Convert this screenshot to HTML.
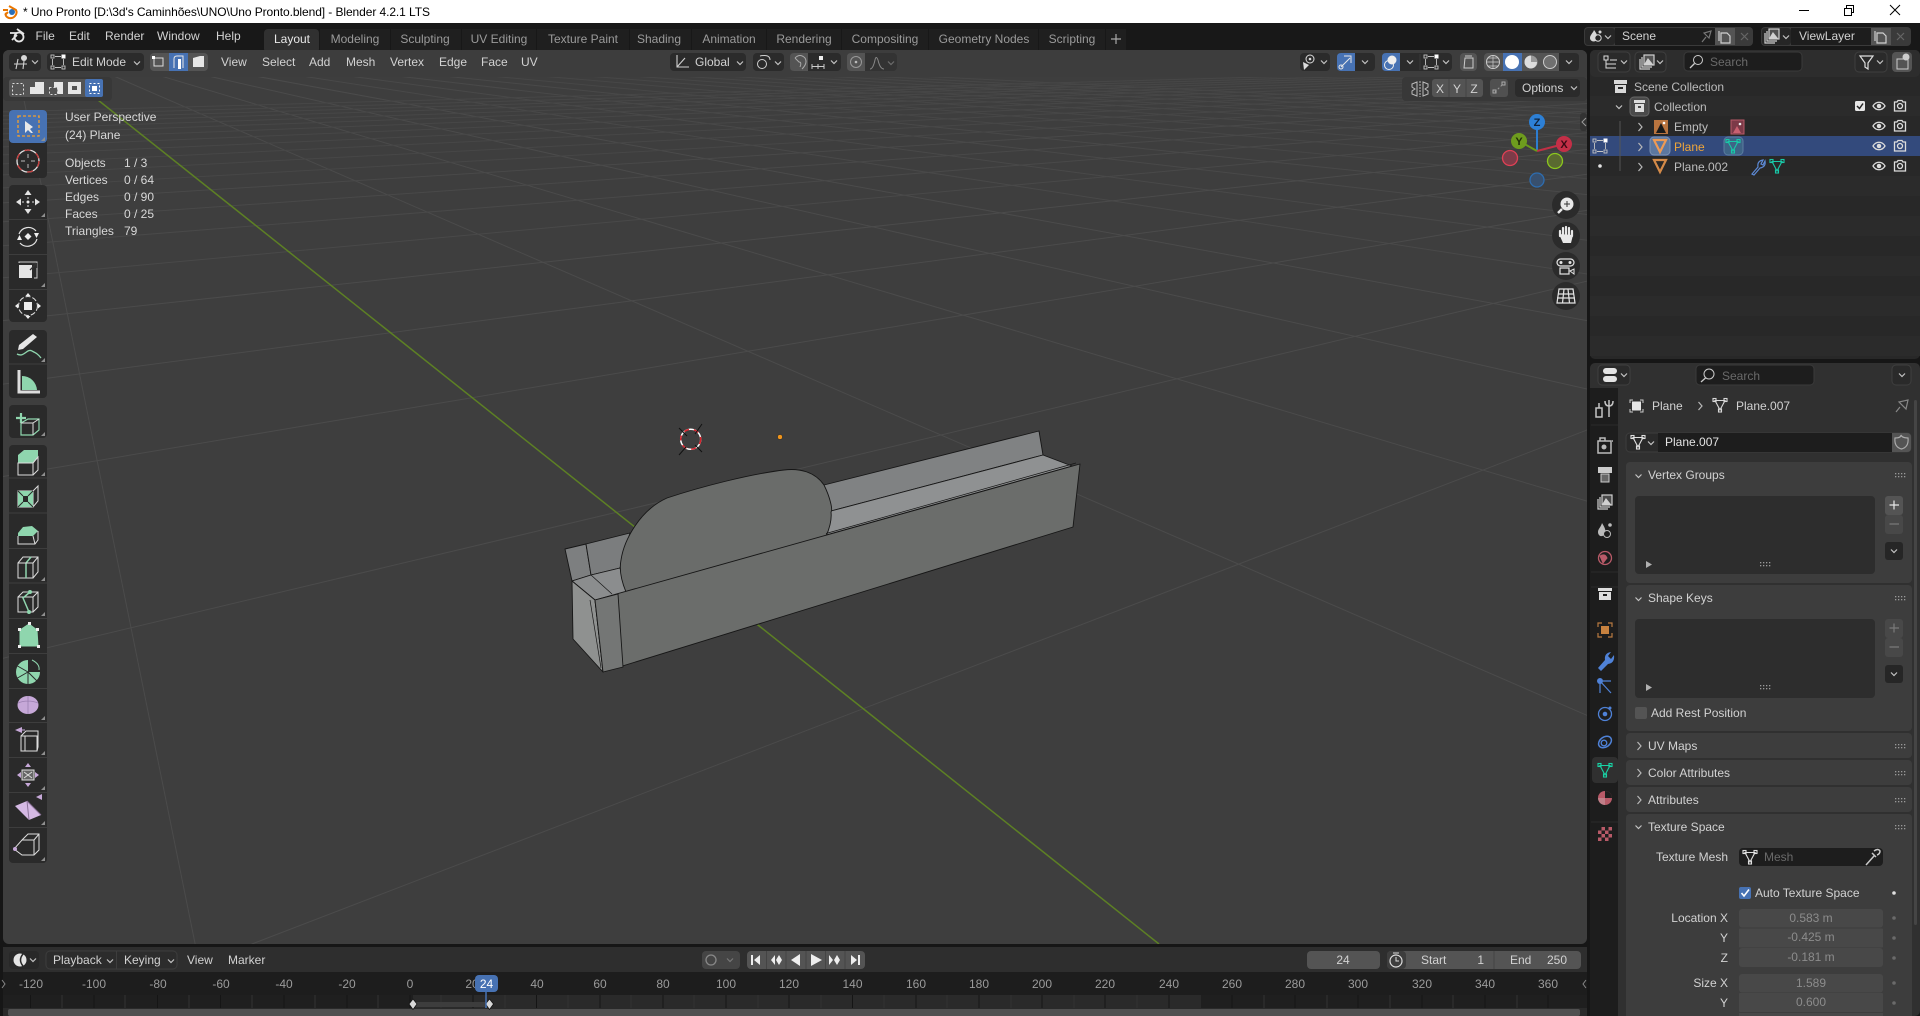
<!DOCTYPE html>
<html><head><meta charset="utf-8"><title>Uno Pronto - Blender 4.2.1 LTS</title>
<style>
html,body{margin:0;padding:0;background:#161616;width:1920px;height:1016px;overflow:hidden}
svg{display:block}
text{font-family:"Liberation Sans",sans-serif;font-size:12px;fill:#d2d2d2}
.n{fill:#d8d8d8}.g{fill:#9b9b9b}.m{text-anchor:middle}.e{text-anchor:end}
.s{fill:none;stroke:#d0d0d0;stroke-width:1.2}
.w{fill:none;stroke:#e4e4e4;stroke-width:1.3}
</style></head><body>
<svg width="1920" height="1016" viewBox="0 0 1920 1016" xmlns="http://www.w3.org/2000/svg">
<defs>
<path id="cd" d="M-3-1.5 0 1.5 3-1.5" fill="none" stroke="#c4c4c4" stroke-width="1.2"/>
<path id="cr" d="M-1.5-4 2 0-1.5 4" fill="none" stroke="#b8b8b8" stroke-width="1.2"/>
<path id="tr" d="M0 0V-4L-4 0Z" fill="#8f8f8f"/>
<g id="mesh" fill="none" stroke="currentColor" stroke-width="1.1"><path d="M-5-4.500H5L0 5Z"/><rect x="-7" y="-6.500" width="3" height="3"/><rect x="4" y="-6.500" width="3" height="3"/><rect x="-1.500" y="4" width="3" height="3"/></g>
<g id="eye" fill="none" stroke="#dcdcdc" stroke-width="1.300"><path d="M-6 0C-3-5 3-5 6 0 3 5-3 5-6 0Z"/><circle r="1.600" fill="#dcdcdc"/></g>
<g id="cam" fill="none" stroke="#dcdcdc" stroke-width="1.300"><path d="M-5.500-4H-3L-2-5.500H2L3-4H5.500V5H-5.500Z"/><circle r="2.500"/></g>
<g id="grip" fill="#9a9a9a"><rect x="0" y="0" width="1.300" height="1.300"/><rect x="3" y="0" width="1.300" height="1.300"/><rect x="6" y="0" width="1.300" height="1.300"/><rect x="9" y="0" width="1.300" height="1.300"/><rect x="0" y="3" width="1.300" height="1.300"/><rect x="3" y="3" width="1.300" height="1.300"/><rect x="6" y="3" width="1.300" height="1.300"/><rect x="9" y="3" width="1.300" height="1.300"/></g>
<g id="imgs" fill="none" stroke="#d0d0d0" stroke-width="1.200"><rect x="-3" y="-7" width="10" height="10" fill="#d0d0d0" fill-opacity=".25"/><path d="M-5-5V5H5M-7-3V7H3"/><path d="M-2 2 1-3 5 2Z" fill="#d0d0d0"/></g>
<g id="sel" fill="none" stroke="#c4c4c4" stroke-width=".9"><path d="M-3-5.500H3M-5.500-3V3M5.500-3V3M-3 5.500H3"/><rect x="-7" y="-7" width="3" height="3"/><rect x="-7" y="4" width="3" height="3"/><rect x="4" y="4" width="3" height="3"/><rect x="3.500" y="-7.500" width="4" height="4" fill="#fff" stroke="none"/></g>
<clipPath id="vp"><rect x="3" y="50" width="1584" height="894" rx="6"/></clipPath>
</defs>

<!-- title bar -->
<rect width="1920" height="23" fill="#fff"/>
<circle cx="12" cy="12" r="3" fill="#2a6fb8"/><path d="M3 10H8M5 15 8 12M9 6 16 10C18 14 14 19 9 18 6 17 5 15 6 13" fill="none" stroke="#ea7600" stroke-width="2"/>
<text x="23" y="16" style="fill:#000" textLength="407">* Uno Pronto [D:\3d's Caminhões\UNO\Uno Pronto.blend] - Blender 4.2.1 LTS</text>
<path d="M1799 10.500H1809" stroke="#000" stroke-width="1"/>
<path d="M1844.500 8.500H1851.500V15.500H1844.500ZM1846.500 8V5.500H1853.500V12.500H1851.500" fill="none" stroke="#000"/>
<path d="M1890 5 1900 15M1900 5 1890 15" stroke="#000" stroke-width="1"/>

<!-- top bar -->
<rect y="23" width="1920" height="27" fill="#181818"/>
<g fill="none" stroke="#e6e6e6" stroke-width="1.800"><circle cx="19" cy="37" r="4.500"/><path d="M10 33H17M12 40 17 35M17 29 24 34"/></g>
<text x="35.500" y="40">File</text><text x="69" y="40">Edit</text><text x="105" y="40">Render</text><text x="157" y="40">Window</text><text x="216" y="40">Help</text>
<g fill="#1f1f1f">
<rect x="320" y="29" width="70" height="21"/><rect x="391" y="29" width="70" height="21"/><rect x="462" y="29" width="74" height="21"/><rect x="537" y="29" width="92" height="21"/><rect x="630" y="29" width="61" height="21"/><rect x="692" y="29" width="74" height="21"/><rect x="767" y="29" width="74" height="21"/><rect x="842" y="29" width="86" height="21"/><rect x="929" y="29" width="109" height="21"/><rect x="1039" y="29" width="66" height="21"/><rect x="1106" y="29" width="20" height="21"/>
</g>
<rect x="264" y="29" width="55" height="24" rx="4" fill="#303030"/>
<text x="292" y="43" class="m" style="fill:#e8e8e8">Layout</text>
<g class="g">
<text x="355" y="43" class="m g">Modeling</text><text x="425" y="43" class="m g">Sculpting</text><text x="499" y="43" class="m g">UV Editing</text><text x="583" y="43" class="m g">Texture Paint</text><text x="659" y="43" class="m g">Shading</text><text x="729" y="43" class="m g">Animation</text><text x="804" y="43" class="m g">Rendering</text><text x="885" y="43" class="m g">Compositing</text><text x="984" y="43" class="m g">Geometry Nodes</text><text x="1072" y="43" class="m g">Scripting</text>
</g>
<path d="M1116 34V44M1111 39H1121" stroke="#a8a8a8" stroke-width="1.200"/>

<!-- scene / view layer -->
<rect x="1584" y="27" width="169" height="19" rx="4" fill="#3a3a3a"/>
<rect x="1585" y="28" width="30" height="17" rx="3" fill="#262626"/>
<rect x="1615" y="28" width="100" height="17" fill="#1d1d1d"/>
<rect x="1715" y="28" width="20" height="17" fill="#545454"/>
<path d="M1594 30C1597 34 1598 36 1597 40 1594 43 1590 41 1590 38 1590 35 1593 33 1594 30Z" fill="#d8d8d8"/><circle cx="1598" cy="38" r="3.200" fill="#262626" stroke="#d8d8d8"/><circle cx="1600" cy="32" r="1.500" fill="#d8d8d8"/>
<use href="#cd" x="1608" y="37"/>
<text x="1622" y="40">Scene</text>
<path d="M1702 42 1706 37M1704 33 1709 38 1711 31Z" fill="none" stroke="#777" stroke-width="1.200"/>
<path d="M1721 33H1727L1730 36V43H1721ZM1719 31V41" fill="none" stroke="#d0d0d0" stroke-width="1.200"/>
<path d="M1741 33 1748 40M1748 33 1741 40" stroke="#666" stroke-width="1.200"/>
<rect x="1761" y="27" width="150" height="19" rx="4" fill="#3a3a3a"/>
<rect x="1762" y="28" width="29" height="17" rx="3" fill="#262626"/>
<rect x="1791" y="28" width="80" height="17" fill="#1d1d1d"/>
<rect x="1871" y="28" width="20" height="17" fill="#545454"/>
<use href="#imgs" x="1772" y="36"/><use href="#cd" x="1786" y="37"/>
<text x="1799" y="40">ViewLayer</text>
<path d="M1877 33H1883L1886 36V43H1877ZM1875 31V41" fill="none" stroke="#d0d0d0" stroke-width="1.200"/>
<path d="M1897 33 1904 40M1904 33 1897 40" stroke="#666" stroke-width="1.200"/>

<!-- viewport -->
<rect x="3" y="50" width="1584" height="894" rx="6" fill="#3e3e3e"/>
<g clip-path="url(#vp)">
<!-- grid family 1 (vanishing at 10,31) -->
<g stroke="#4b4b4b" stroke-width="1">
<line x1="10" y1="31" x2="206.500" y2="1000"/><line x1="10" y1="31" x2="1600" y2="721"/><line x1="10" y1="31" x2="1600" y2="505"/><line x1="10" y1="31" x2="1600" y2="392"/><line x1="10" y1="31" x2="1600" y2="323"/>
</g>
<g stroke="#494949" stroke-width="1">
<line x1="10" y1="31" x2="1600" y2="276"/><line x1="10" y1="31" x2="1600" y2="242"/><line x1="10" y1="31" x2="1600" y2="216"/><line x1="10" y1="31" x2="1600" y2="196"/>
</g>
<g stroke="#474747" stroke-width="1">
<line x1="10" y1="31" x2="1600" y2="180"/><line x1="10" y1="31" x2="1600" y2="166"/><line x1="10" y1="31" x2="1600" y2="155"/><line x1="10" y1="31" x2="1600" y2="146"/><line x1="10" y1="31" x2="1600" y2="138"/><line x1="10" y1="31" x2="1600" y2="131"/><line x1="10" y1="31" x2="1600" y2="124.500"/><line x1="10" y1="31" x2="1600" y2="119"/><line x1="10" y1="31" x2="1600" y2="114.500"/><line x1="10" y1="31" x2="1600" y2="110"/>
</g>
<!-- grid family 2 (vanishing at 2600,40) -->
<g stroke="#4b4b4b" stroke-width="1">
<line x1="2600" y1="40" x2="0" y2="1041"/><line x1="2600" y1="40" x2="0" y2="659"/><line x1="2600" y1="40" x2="0" y2="477"/><line x1="2600" y1="40" x2="0" y2="384.500"/><line x1="2600" y1="40" x2="0" y2="321"/>
</g>
<g stroke="#494949" stroke-width="1">
<line x1="2600" y1="40" x2="0" y2="278"/><line x1="2600" y1="40" x2="0" y2="246"/><line x1="2600" y1="40" x2="0" y2="222"/><line x1="2600" y1="40" x2="0" y2="203"/>
</g>
<g stroke="#474747" stroke-width="1">
<line x1="2600" y1="40" x2="0" y2="188"/><line x1="2600" y1="40" x2="0" y2="175"/><line x1="2600" y1="40" x2="0" y2="164"/><line x1="2600" y1="40" x2="0" y2="155"/><line x1="2600" y1="40" x2="0" y2="147"/><line x1="2600" y1="40" x2="0" y2="140"/><line x1="2600" y1="40" x2="0" y2="134"/><line x1="2600" y1="40" x2="0" y2="129"/><line x1="2600" y1="40" x2="0" y2="124"/><line x1="2600" y1="40" x2="0" y2="120"/><line x1="2600" y1="40" x2="0" y2="116"/><line x1="2600" y1="40" x2="0" y2="112"/>
</g>
<line x1="10" y1="30" x2="1159" y2="944" stroke="#5d8024" stroke-width="1.500"/>
<rect x="3" y="50" width="1584" height="27" fill="#3d3d3d"/>
</g>

<!-- mesh -->
<g stroke="#161616" stroke-width=".9" stroke-linejoin="round">
<polygon points="824,485 1039,431 1043,455 831,511" fill="#808283"/>
<polygon points="831,511 1043,455 1072,466 826,535" fill="#8f9192"/>
<polygon points="565,549 586,544 591,575 572,581" fill="#7d7f80"/>
<polygon points="586,544 630,533 620,568 591,575" fill="#7b7d7e"/>
<polygon points="572,581 591,575 620,568 626,592 595,600" fill="#8b8d8e"/>
<path d="M591 575 612 594" fill="none" stroke-width=".7"/>
<polygon points="572,581 595,600 603,672 573,639" fill="#8f9190"/>
<path d="M590 600 601 668" fill="none" stroke-width=".7"/>
<path d="M626 592C621 580 619 570 621 560 624 540 640 510 667 498 700 487 750 474 784 470 800 468 815 472 824 485 830 497 833 510 831 512 832 520 829 530 826 536Z" fill="#6a6c6a"/>
<polygon points="595,600 1080,464 1073,527 603,672" fill="#6b6d6b"/>
<polygon points="595,600 618,594 623,667 603,672" fill="#747675"/>
<path d="M826 533.500 1076 463" fill="none" stroke-width=".7"/>
</g>
<!-- 3d cursor + origin -->
<circle cx="690.700" cy="439.300" r="10" fill="none" stroke="#fff" stroke-width="1.500"/>
<circle cx="690.700" cy="439.300" r="10" fill="none" stroke="#d8202a" stroke-width="1.500" stroke-dasharray="5 5"/>
<path d="M679 428 687 436M702 424 695 434M679 455 686 447M702 452 695 445" stroke="#111" stroke-width="1"/>
<circle cx="780" cy="437" r="2.500" fill="#f0951c" stroke="#222" stroke-width=".5"/>

<!-- viewport header -->
<rect x="9" y="53" width="32" height="18" rx="4" fill="#2b2b2b"/>
<circle cx="24" cy="58" r="3" fill="#d8d8d8"/><path d="M14 64H27M18 59 16 69M24 61 23 69" stroke="#d0d0d0" stroke-width="1.100"/>
<use href="#cd" x="35" y="62"/>
<rect x="47" y="53" width="97" height="18" rx="4" fill="#2b2b2b"/>
<use href="#sel" x="58" y="62"/>
<text x="72" y="66">Edit Mode</text><use href="#cd" x="137" y="63"/>
<rect x="150" y="53" width="58" height="18" rx="4" fill="#545454"/>
<rect x="169" y="53" width="19" height="18" fill="#4772b3"/>
<path d="M154 58H163V66H154Z" fill="none" stroke="#ddd"/><rect x="152" y="56" width="3" height="3" fill="#fff"/>
<path d="M174 68V59Q174 56 177 56H183V68" fill="none" stroke="#e8e8e8"/><rect x="178" y="59" width="3" height="10" fill="#fff"/>
<path d="M193 58 200 56H204V67H193Z" fill="#e6e6e6"/>
<text x="221" y="66">View</text><text x="262" y="66">Select</text><text x="309" y="66">Add</text><text x="346" y="66">Mesh</text><text x="390" y="66">Vertex</text><text x="439" y="66">Edge</text><text x="481" y="66">Face</text><text x="521" y="66">UV</text>

<rect x="670" y="53" width="76" height="18" rx="4" fill="#2b2b2b"/>
<path d="M677 55V67H689M677 67 685 58" fill="none" stroke="#d0d0d0" stroke-width="1.100"/>
<text x="695" y="66">Global</text><use href="#cd" x="740" y="63"/>
<rect x="753" y="53" width="31" height="18" rx="4" fill="#2b2b2b"/>
<circle cx="762" cy="64" r="4.500" fill="none" stroke="#d0d0d0"/><path d="M760 56Q770 54 770 60" fill="none" stroke="#d0d0d0"/><use href="#cd" x="778" y="63"/>
<rect x="790" y="53" width="51" height="18" rx="4" fill="#2b2b2b"/>
<path d="M790 57Q790 53 794 53H808V71H794Q790 71 790 67Z" fill="#545454"/>
<path d="M795 58Q800 53 805 58 808 63 802 69M795 58 799 62Q802 62 800 67" fill="none" stroke="#aaa"/>
<path d="M812 64V69M818 64V69M824 64V69M812 66.500H824" stroke="#ccc" fill="none"/><rect x="819" y="56" width="4" height="4" fill="#eee"/><use href="#cd" x="834" y="62"/>
<rect x="847" y="53" width="50" height="18" rx="4" fill="#333"/>
<path d="M851 53H865V71H851Q847 71 847 67V57Q847 53 851 53Z" fill="#545454"/>
<circle cx="856" cy="62" r="5.500" fill="none" stroke="#999"/><circle cx="856" cy="62" r="1.300" fill="#bbb"/>
<path d="M870 69Q873 69 875 60 876 55 878 60 880 69 884 69" fill="none" stroke="#888"/>
<use href="#cd" x="891" y="63" opacity=".4"/>

<rect x="1300" y="53" width="30" height="18" rx="4" fill="#2b2b2b"/>
<circle cx="1310" cy="59" r="4" fill="none" stroke="#dcdcdc"/><circle cx="1310" cy="59" r="1.300" fill="#dcdcdc"/><path d="M1303 62 1309 65 1304 70Z" fill="#dcdcdc"/><use href="#cd" x="1324" y="62"/>
<rect x="1337" y="53" width="38" height="18" rx="4" fill="#2b2b2b"/>
<path d="M1341 53H1355V71H1341Q1337 71 1337 67V57Q1337 53 1341 53Z" fill="#4772b3"/>
<path d="M1341 67 1350 58M1344 56H1351V63" fill="none" stroke="#e8e8e8"/><circle cx="1341" cy="67" r="2" fill="none" stroke="#e8e8e8"/><use href="#cd" x="1365" y="62"/>
<rect x="1382" y="53" width="70" height="18" rx="4" fill="#2b2b2b"/>
<path d="M1386 53H1400V71H1386Q1382 71 1382 67V57Q1382 53 1386 53Z" fill="#4772b3"/>
<circle cx="1392" cy="60" r="4.500" fill="#eee"/><circle cx="1389" cy="65" r="4.500" fill="none" stroke="#eee"/><use href="#cd" x="1410" y="62"/>
<path d="M1420 54V70" stroke="#3a3a3a"/><use href="#sel" x="1431" y="62"/><use href="#cd" x="1446" y="62"/>
<rect x="1460" y="53" width="17" height="18" rx="4" fill="#545454"/>
<path d="M1465 58H1473V68H1464ZM1465 56H1472" fill="none" stroke="#ccc"/>
<rect x="1484" y="53" width="95" height="18" rx="4" fill="#545454"/>
<rect x="1503" y="53" width="19" height="18" fill="#4772b3"/>
<path d="M1559 53H1575Q1579 53 1579 57V67Q1579 71 1575 71H1559Z" fill="#2b2b2b"/>
<circle cx="1493" cy="62" r="6.500" fill="none" stroke="#ccc"/><path d="M1487 62H1499M1493 56V68M1488 58H1498M1488 66H1498" stroke="#ccc" stroke-width=".7"/>
<circle cx="1512" cy="62" r="7" fill="#fff"/>
<circle cx="1531" cy="62" r="6.500" fill="#999"/><path d="M1531 55.500A6.500 6.500 0 0 0 1531 68.500 6.500 6.500 0 0 0 1537 62H1531Z" fill="#ddd"/>
<circle cx="1550" cy="62" r="6.500" fill="#707070" stroke="#ccc"/><use href="#cd" x="1569" y="62"/>

<!-- tool settings -->
<rect x="3" y="77" width="109" height="24" rx="4" fill="#383838"/>
<rect x="9" y="79" width="94" height="18" rx="3" fill="#545454"/>
<rect x="85" y="79" width="18" height="18" rx="2" fill="#4772b3"/>
<rect x="12.500" y="83.500" width="11" height="11" fill="none" stroke="#ddd" stroke-dasharray="2 2"/>
<path d="M35 82H44V94H30V87H35Z" fill="#e6e6e6"/>
<path d="M54 82H63V94H54" fill="#e6e6e6"/><rect x="49.500" y="87.500" width="8" height="7" fill="#545454" stroke="#ddd" stroke-dasharray="2 2"/>
<path d="M68 82H81V94H68ZM72 86V90H77V86Z" fill="#e6e6e6" fill-rule="evenodd"/>
<rect x="89.500" y="83.500" width="10" height="10" fill="none" stroke="#fff" stroke-dasharray="2 2"/><rect x="92" y="86" width="5" height="5" fill="#fff"/>
<rect x="1402" y="77" width="185" height="24" rx="4" fill="#383838"/>
<path d="M1420 81V97" stroke="#bbb" stroke-dasharray="2 1"/><path d="M1417 82 1412 84V87L1415 89 1412 91V94L1417 96ZM1423 82 1428 84V87L1425 89 1428 91V94L1423 96Z" fill="none" stroke="#bbb"/>
<rect x="1432" y="79" width="51" height="18" rx="3" fill="#545454"/><path d="M1449 79V97M1466 79V97" stroke="#444"/>
<text x="1440" y="93" class="m">X</text><text x="1457" y="93" class="m">Y</text><text x="1474" y="93" class="m">Z</text>
<rect x="1490" y="79" width="18" height="18" rx="3" fill="#505050"/>
<path d="M1495 92 1503 84" stroke="#999" stroke-dasharray="2 2"/><rect x="1493" y="90" width="3" height="3" fill="none" stroke="#aaa"/><rect x="1502" y="82" width="3" height="3" fill="none" stroke="#aaa"/>
<rect x="1515" y="79" width="65" height="18" rx="4" fill="#2b2b2b"/>
<text x="1522" y="92">Options</text><use href="#cd" x="1574" y="88"/>

<!-- stats text -->
<g>
<text x="65" y="121" class="n">User Perspective</text><text x="65" y="139" class="n">(24) Plane</text>
<text x="65" y="167" class="n">Objects</text><text x="124" y="167" class="n">1 / 3</text>
<text x="65" y="184" class="n">Vertices</text><text x="124" y="184" class="n">0 / 64</text>
<text x="65" y="201" class="n">Edges</text><text x="124" y="201" class="n">0 / 90</text>
<text x="65" y="218" class="n">Faces</text><text x="124" y="218" class="n">0 / 25</text>
<text x="65" y="235" class="n">Triangles</text><text x="124" y="235" class="n">79</text>
</g>

<!-- toolbar -->
<g fill="#2a2a2a">
<rect x="9" y="110" width="38" height="68" rx="4"/><rect x="9" y="185" width="38" height="137" rx="4"/><rect x="9" y="330" width="38" height="68" rx="4"/><rect x="9" y="405" width="38" height="33" rx="4"/><rect x="9" y="445" width="38" height="418" rx="4"/>
</g>
<rect x="9" y="110" width="38" height="33" rx="4" fill="#4772b3"/>
<path d="M9 219.500H47M9 254.500H47M9 289.500H47M9 364H47M9 478H47M9 513H47M9 548.500H47M9 583H47M9 618.500H47M9 653.500H47M9 688.500H47M9 722.500H47M9 757.500H47M9 792.500H47M9 827.500H47" stroke="#3d3d3d"/>
<rect x="18" y="116" width="21" height="20" fill="none" stroke="#f0a030" stroke-width="1.300" stroke-dasharray="3 2"/>
<path d="M25 121V133L28 130 31 133H33L30 129 33 127Z" fill="#e8e8e8"/>
<use href="#tr" x="45" y="141"/><use href="#tr" x="45" y="217"/><use href="#tr" x="45" y="287"/><use href="#tr" x="45" y="362"/><use href="#tr" x="45" y="436"/><use href="#tr" x="45" y="476"/><use href="#tr" x="45" y="581"/><use href="#tr" x="45" y="616"/><use href="#tr" x="45" y="720"/><use href="#tr" x="45" y="755"/><use href="#tr" x="45" y="790"/><use href="#tr" x="45" y="825"/><use href="#tr" x="45" y="861"/>
<!-- cursor -->
<circle cx="28" cy="161" r="11" fill="none" stroke="#e0e0e0" stroke-width="1.300"/><circle cx="28" cy="161" r="11" fill="none" stroke="#c83c3c" stroke-width="1.300" stroke-dasharray="6 6"/>
<path d="M28 154V158M28 164V168M21 161H25M31 161H35" stroke="#bbb"/>
<!-- move -->
<path d="M28 190 24.500 195H31.500ZM28 214 24.500 209H31.500ZM16 202 21 198.500V205.500ZM40 202 35 198.500V205.500Z" fill="#e4e4e4"/><path d="M28 197V199M28 205V207M22 202H24M32 202H34" stroke="#ddd"/><circle cx="28" cy="202" r="1.500" fill="#eee"/>
<!-- rotate -->
<path d="M19 234A10 10 0 0 1 36 231M37 239A10 10 0 0 1 20 243" fill="none" stroke="#e4e4e4" stroke-width="1.200"/><path d="M28 233 31.500 236.500 28 240 24.500 236.500Z" fill="#eee"/><path d="M17 240H22L19.500 235ZM34 233H39L36.500 238Z" fill="#eee"/>
<!-- scale -->
<rect x="19" y="265" width="13" height="13" fill="#e4e4e4"/><path d="M19 263V262H37V278H34" fill="none" stroke="#ccc"/><path d="M30 270 36 264M32 263.500H36.500V268" fill="none" stroke="#333" stroke-width="1.300"/>
<!-- transform -->
<circle cx="28" cy="306" r="9.500" fill="none" stroke="#ddd" stroke-dasharray="5 2" stroke-width="1.100"/><rect x="24" y="302" width="8" height="8" fill="#eee"/><path d="M28 293 25.500 296H30.500ZM28 319 25.500 316H30.500ZM15 306 18 303.500V308.500ZM41 306 38 303.500V308.500Z" fill="#eee"/>
<!-- annotate -->
<path d="M19 345 33 334 37 337 23 349 18 350Z" fill="#e6e6e6"/><path d="M17 354C24 358 27 348 32 351 36 353 38 354 41 358" fill="none" stroke="#8fd6ae" stroke-width="1.300"/>
<!-- measure -->
<path d="M19 370V392H40" fill="none" stroke="#ddd" stroke-width="3"/><path d="M22 390V376A15 15 0 0 1 37 390Z" fill="#8fd6ae"/>
<!-- add cube -->
<path d="M21 413V423M16 418H26" stroke="#8fd6ae" stroke-width="2.200"/><path d="M21 423 28 419H39V430L33 435H21Z" fill="none" stroke="#8fd6ae" stroke-width="1.200"/><path d="M21 423H33V435M33 423 39 419" fill="none" stroke="#ddd"/>
<!-- extrude -->
<path d="M18 455 24 450H38V457L33 463H18Z" fill="#8fd6ae"/><path d="M18 463H33V475H18ZM33 463 38 457V470L33 475" fill="none" stroke="#ddd"/>
<!-- inset -->
<path d="M18 491H33V507H18ZM33 491 38 486V501L33 507" fill="none" stroke="#ddd"/><path d="M18 491H33V507H18ZM23 496V502H28V496Z" fill="#8fd6ae" fill-rule="evenodd"/><path d="M18 491 23 496M33 491 28 496M18 507 23 502M33 507 28 502" stroke="#2a2a2a"/>
<!-- bevel -->
<path d="M18 533 23 527 32 526 38 531 33 536H18Z" fill="#8fd6ae"/><path d="M18 536V544H35L38 540V531M33 536 35 544" fill="none" stroke="#ddd"/>
<!-- loop cut -->
<path d="M18 563V578H33V563ZM18 563 23 557H38V572L33 578M33 563 38 557" fill="none" stroke="#ddd"/><path d="M26 578V563L31 557" fill="none" stroke="#8fd6ae" stroke-width="1.500"/><path d="M18 563H33" stroke="#ddd"/>
<!-- knife -->
<path d="M18 597V612H33V597ZM18 597 23 592H38V607L33 612M33 597 38 592" fill="none" stroke="#ddd"/><path d="M30 592 23 598 29 612" fill="none" stroke="#8fd6ae" stroke-width="1.500"/><circle cx="30" cy="592" r="2" fill="#8fd6ae"/><circle cx="29" cy="612" r="2" fill="#8fd6ae"/>
<!-- poly build -->
<path d="M20 630 29 624 37 630 38 646H20Z" fill="#8fd6ae" stroke="#8fd6ae"/><g fill="#eee"><rect x="18" y="628" width="3" height="3"/><rect x="28" y="622" width="3" height="3"/><rect x="36" y="628" width="3" height="3"/><rect x="37" y="645" width="3" height="3"/><rect x="18" y="645" width="3" height="3"/></g>
<!-- spin -->
<path d="M28 672V660A12 12 0 1 0 40 672Z" fill="#8fd6ae"/><path d="M28 672V684M28 672 17.500 666M28 672 17.500 678M28 672 37 681" stroke="#2a2a2a"/><path d="M32 660Q40 664 39 670" fill="none" stroke="#8fd6ae"/>
<!-- smooth -->
<ellipse cx="28" cy="705" rx="10.500" ry="9" fill="#c6a8d8"/><path d="M18 703Q28 699 38 703M28 696V714" fill="none" stroke="#9a7fb0" stroke-width=".8"/>
<!-- edge slide -->
<path d="M21 736V751H37V736ZM37 736V751" fill="none" stroke="#ddd"/><path d="M21 736 26 731H38V747L37 751M25 736V751" fill="none" stroke="#ddd"/><path d="M15 730 22 727V733Z" fill="#c6a8d8"/><path d="M22 730H25" stroke="#c6a8d8"/>
<!-- shrink/fatten -->
<rect x="22" y="770" width="12" height="10" fill="#666" stroke="#ddd"/><path d="M24 772 32 778M32 772 24 778" stroke="#ddd"/><path d="M28 763 25 767H31ZM28 787 25 783H31ZM17 775 21 772V778ZM39 775 35 772V778Z" fill="#c6a8d8"/>
<!-- shear -->
<path d="M15 806 27 801 41 815 29 820Z" fill="#d5b9e4"/><path d="M27 801 29 820M27 801 41 815" stroke="#8a7298"/><path d="M36 797 42 794V800Z" fill="#c6a8d8"/>
<!-- rip -->
<path d="M22 840 28 834H39V850L34 855H22L14 849 22 840H34V855M34 840 39 834" fill="none" stroke="#ddd"/><circle cx="15" cy="849" r="2" fill="#c6a8d8"/>

<!-- gizmo -->
<path d="M1537 151V122" stroke="#2d7dd0" stroke-width="2"/><path d="M1537 151 1564 144" stroke="#c03045" stroke-width="2"/><path d="M1537 151 1519 141" stroke="#6a9a1c" stroke-width="2"/>
<circle cx="1510" cy="158" r="7.500" fill="#7d3b48" stroke="#e04055" stroke-width="1.300"/><circle cx="1555" cy="161" r="7.500" fill="#5a6a30" stroke="#8cc81e" stroke-width="1.300"/><circle cx="1537" cy="180" r="7" fill="#38506e" stroke="#2d6db0" stroke-width="1.300"/>
<circle cx="1537" cy="122" r="8" fill="#2d80d6"/><circle cx="1564" cy="144" r="8" fill="#c42f47"/><circle cx="1519" cy="141" r="8" fill="#6e9c1e"/>
<text x="1537" y="126" class="m" style="fill:#10223a;font-weight:bold;font-size:11px">Z</text><text x="1564" y="148" class="m" style="fill:#3a0a14;font-weight:bold;font-size:11px">X</text><text x="1519" y="145" class="m" style="fill:#1f2c08;font-weight:bold;font-size:11px">Y</text>
<rect x="1580" y="113" width="7" height="18" rx="3" fill="#333"/><path d="M1586 118 1582 122 1586 126" fill="none" stroke="#999"/>
<g fill="#2b2b2b"><circle cx="1566" cy="205" r="14"/><circle cx="1566" cy="236" r="14"/><circle cx="1566" cy="266" r="14"/><circle cx="1566" cy="296" r="14"/></g>
<circle cx="1567" cy="204" r="6.500" fill="#e8e8e8"/><path d="M1564 204H1570M1567 201V207" stroke="#333"/><path d="M1562 209 1558 213" stroke="#e8e8e8" stroke-width="2.500"/>
<path d="M1560 236V231M1563 235V228M1566 235V227M1569 235V228M1572 236V231" stroke="#e8e8e8" stroke-width="2.200" stroke-linecap="round"/><path d="M1559 234 1563 243H1571L1573 235Z" fill="#e8e8e8"/>
<rect x="1557" y="259" width="17" height="7" rx="3.500" fill="none" stroke="#e4e4e4" stroke-width="1.200"/><circle cx="1561" cy="262.500" r="1.500" fill="#e4e4e4"/><circle cx="1570" cy="262.500" r="1.500" fill="#e4e4e4"/><rect x="1560" y="268" width="9" height="6" fill="none" stroke="#e4e4e4" stroke-width="1.200"/><path d="M1570 271 1574 269V274Z" fill="none" stroke="#e4e4e4"/>
<path d="M1559 289H1573L1575 303H1557ZM1558 294H1574M1557 298H1575M1564 289 1562.500 303M1568 289 1569.500 303" fill="none" stroke="#e4e4e4" stroke-width="1.200"/>

<!-- timeline -->
<rect x="3" y="947" width="1584" height="69" fill="#2e2e2e"/>
<rect x="3" y="972" width="1584" height="23" fill="#1d1d1d"/>
<rect x="3" y="995" width="410" height="13" fill="#1f1f1f"/><rect x="413" y="995" width="788" height="13" fill="#2a2a2a"/><rect x="1201" y="995" width="386" height="13" fill="#1f1f1f"/>
<path d="M30.500 995V1008M94 995V1008M157.500 995V1008M220.500 995V1008M284 995V1008M347 995V1008M410 995V1008M473 995V1008M536.500 995V1008M600 995V1008M663 995V1008M726 995V1008M789 995V1008M852.500 995V1008M916 995V1008M979 995V1008M1042 995V1008M1105 995V1008M1169 995V1008M1232 995V1008M1295 995V1008M1358 995V1008M1422 995V1008M1485 995V1008M1548 995V1008" stroke="#151515"/>
<path d="M62 995V1008M125 995V1008M189 995V1008M252 995V1008M315 995V1008M378 995V1008M441 995V1008M505 995V1008M568 995V1008M631 995V1008M694 995V1008M758 995V1008M821 995V1008M884 995V1008M947 995V1008M1011 995V1008M1074 995V1008M1137 995V1008M1264 995V1008M1327 995V1008M1390 995V1008M1453 995V1008M1517 995V1008" stroke="#333"/>
<rect x="3" y="1008" width="1584" height="8" fill="#2a2a2a"/><rect x="8" y="1009" width="1572" height="7" rx="2" fill="#505050"/>
<rect x="413" y="1002" width="74" height="5" fill="#3d3d3d"/>
<path d="M413 999 417 1004 413 1009.500 409 1004ZM489.500 999 493.500 1004 489.500 1009.500 485.500 1004Z" fill="#d8d8d8" stroke="#111" stroke-width=".7"/>
<g class="g">
<text x="31" y="988" class="m g">-120</text><text x="94" y="988" class="m g">-100</text><text x="158" y="988" class="m g">-80</text><text x="221" y="988" class="m g">-60</text><text x="284" y="988" class="m g">-40</text><text x="347" y="988" class="m g">-20</text><text x="410" y="988" class="m g">0</text><text x="472" y="988" class="m g">20</text><text x="537" y="988" class="m g">40</text><text x="600" y="988" class="m g">60</text><text x="663" y="988" class="m g">80</text><text x="726" y="988" class="m g">100</text><text x="789" y="988" class="m g">120</text><text x="852.500" y="988" class="m g">140</text><text x="916" y="988" class="m g">160</text><text x="979" y="988" class="m g">180</text><text x="1042" y="988" class="m g">200</text><text x="1105" y="988" class="m g">220</text><text x="1169" y="988" class="m g">240</text><text x="1232" y="988" class="m g">260</text><text x="1295" y="988" class="m g">280</text><text x="1358" y="988" class="m g">300</text><text x="1422" y="988" class="m g">320</text><text x="1485" y="988" class="m g">340</text><text x="1548" y="988" class="m g">360</text>
</g>
<path d="M486 990V1008" stroke="#4772b3" stroke-width="1.500"/>
<rect x="475" y="975" width="23" height="17" rx="4" fill="#4772b3"/><text x="486.500" y="988" class="m" style="fill:#fff">24</text>
<path d="M2 980 5 984 2 988" fill="none" stroke="#888"/><path d="M1586 980 1583 984 1586 988" fill="none" stroke="#888"/>
<rect x="9" y="951" width="30" height="18" rx="4" fill="#282828"/><circle cx="20" cy="960" r="6.500" fill="#e4e4e4"/><path d="M23 954Q18 960 23 966" fill="none" stroke="#282828" stroke-width="1.500"/><use href="#cd" x="33" y="960"/>
<rect x="46" y="951" width="131" height="18" rx="4" fill="#2c2c2c" stroke="#3d3d3d"/><path d="M116.500 951V969" stroke="#3d3d3d"/>
<text x="53" y="964">Playback</text><use href="#cd" x="110" y="961"/><text x="124" y="964">Keying</text><use href="#cd" x="171" y="961"/>
<text x="187" y="964">View</text><text x="228" y="964">Marker</text>
<rect x="702" y="951" width="38" height="18" rx="4" fill="#454545"/><circle cx="711" cy="960" r="5" fill="none" stroke="#888" stroke-width="1.300"/><use href="#cd" x="730" y="960" opacity=".4"/>
<rect x="747" y="951" width="118" height="18" rx="4" fill="#545454"/>
<path d="M766.500 951V969M786 951V969M806 951V969M825.500 951V969M845 951V969" stroke="#444"/>
<g fill="#eee"><path d="M751 955H753V965H751ZM760 955V965L754 960Z"/><path d="M771 960 775 955V965ZM776 960 779 955 782 960 779 965Z"/><path d="M800 954V966L791 960Z"/><path d="M811 954 822 960 811 966Z"/><path d="M829 955 833 960 829 965ZM834 960 837 955 840 960 837 965Z"/><path d="M851 955 857 960 851 965ZM858 955H860V965H858Z"/></g>
<rect x="1307" y="951" width="73" height="18" rx="4" fill="#545454"/><text x="1343" y="964" class="m">24</text>
<rect x="1387" y="951" width="194" height="18" rx="4" fill="#545454"/><rect x="1387" y="951" width="19" height="18" rx="4" fill="#3d3d3d"/>
<circle cx="1396" cy="961" r="6" fill="none" stroke="#ddd" stroke-width="1.200"/><path d="M1396 957V961H1399M1393 953H1399" fill="none" stroke="#ddd"/>
<path d="M1494 951V969" stroke="#444"/>
<text x="1421" y="964">Start</text><text x="1484" y="964" class="e">1</text><text x="1510" y="964">End</text><text x="1567" y="964" class="e">250</text>

<!-- outliner -->
<rect x="1590" y="50" width="330" height="309" rx="5" fill="#282828"/>
<g fill="#2b2b2b"><rect x="1590" y="96" width="330" height="20"/><rect x="1590" y="176" width="330" height="20"/><rect x="1590" y="216" width="330" height="20"/><rect x="1590" y="256" width="330" height="20"/><rect x="1590" y="296" width="330" height="20"/><rect x="1590" y="336" width="330" height="20"/></g>
<rect x="1590" y="50" width="330" height="27" rx="5" fill="#2d2d2d"/>
<rect x="1590" y="136" width="330" height="20" fill="#334a7c"/>
<rect x="1598" y="52" width="32" height="20" rx="4" fill="#2a2a2a" stroke="#3f3f3f"/><path d="M1604 56H1608V60H1604ZM1606 60V68H1616M1606 64H1616M1610 60H1617" stroke="#ddd" fill="none"/><use href="#cd" x="1624" y="62"/>
<rect x="1635" y="52" width="31" height="20" rx="4" fill="#2a2a2a" stroke="#3f3f3f"/><use href="#imgs" x="1647" y="62"/><use href="#cd" x="1660" y="62"/>
<rect x="1684" y="52" width="118" height="19" rx="4" fill="#1d1d1d" stroke="#3a3a3a"/><circle cx="1698" cy="60" r="4.500" fill="none" stroke="#ccc"/><path d="M1694.500 63.500 1690 68" stroke="#ccc" stroke-width="1.300"/><text x="1710" y="66" style="fill:#6a6a6a">Search</text>
<rect x="1855" y="52" width="32" height="20" rx="4" fill="#2a2a2a" stroke="#3f3f3f"/><path d="M1860 56H1873L1868 63V69L1865 67V63Z" fill="none" stroke="#ddd" stroke-width="1.200"/><use href="#cd" x="1880" y="62"/>
<rect x="1892" y="52" width="20" height="20" rx="4" fill="#545454"/><path d="M1897 59H1903M1897 59H1908V69H1897Z" fill="none" stroke="#ccc"/><circle cx="1906" cy="57" r="3.500" fill="#ccc"/>
<g fill="#d8d8d8"><path d="M1614 80H1627V84H1614ZM1615 85H1626V93H1615ZM1618 87V89H1623V87Z" fill-rule="evenodd"/></g>
<text x="1634" y="91" class="g" style="fill:#bbb">Scene Collection</text>
<use href="#cd" x="1619" y="107"/>
<rect x="1630" y="97" width="19" height="19" rx="4" fill="#4a4a4a" stroke="#666"/><path d="M1634 100H1645V103H1634ZM1635 104H1644V112H1635ZM1638 106V108H1641V106Z" fill="#ddd" fill-rule="evenodd"/>
<text x="1654" y="111" style="fill:#bbb">Collection</text>
<rect x="1855" y="101" width="10" height="10" rx="1.500" fill="#e6e6e6"/><path d="M1857 106 1859.500 108.500 1863 103.500" fill="none" stroke="#222" stroke-width="1.500"/>
<use href="#eye" x="1879" y="106"/><use href="#cam" x="1900" y="106"/>
<use href="#eye" x="1879" y="126"/><use href="#cam" x="1900" y="126"/>
<use href="#eye" x="1879" y="146"/><use href="#cam" x="1900" y="146"/>
<use href="#eye" x="1879" y="166"/><use href="#cam" x="1900" y="166"/>
<path d="M1620 121V171" stroke="#555"/>
<use href="#cr" x="1640" y="127"/><use href="#cr" x="1640" y="147"/><use href="#cr" x="1640" y="167"/>
<rect x="1654" y="120" width="14" height="14" fill="#b9743f"/><path d="M1656 133 1661 123 1666 133Z" fill="#1a1a1a"/><circle cx="1664" cy="123" r="1.300" fill="#fff"/>
<text x="1674" y="131" style="fill:#bdbdbd">Empty</text>
<rect x="1731" y="120" width="13" height="14" fill="#7c3a48" stroke="#b85a68"/><path d="M1733 133 1737 126 1741 133Z" fill="#c96070"/><circle cx="1740" cy="124" r="1.300" fill="#eee"/>
<rect x="1650" y="137" width="20" height="18" rx="4" fill="#5c77a0" stroke="#7d93b4"/><path d="M1654 140H1666L1660 152Z" fill="none" stroke="#ee9a55" stroke-width="2.200"/>
<text x="1674" y="151" style="fill:#f0a63a">Plane</text>
<rect x="1724" y="137" width="19" height="18" rx="4" fill="#3e6486" stroke="#5c7da0"/><use href="#mesh" x="1733" y="146" style="color:#19c8a8"/>
<use href="#sel" x="1600" y="146"/>
<circle cx="1600" cy="166" r="1.800" fill="#e4e4e4"/>
<path d="M1654 160H1666L1660 172Z" fill="none" stroke="#d48a48" stroke-width="2.200"/>
<text x="1674" y="171" style="fill:#bdbdbd">Plane.002</text>
<path d="M1752 174 1758 167Q1757 161 1763 160L1761 164 1763 165 1765 161Q1766 167 1760 168L1754 175Z" fill="none" stroke="#5d8ad6" stroke-width="1.200"/>
<use href="#mesh" x="1777" y="166" style="color:#19c8a8"/>

<!-- properties -->
<rect x="1590" y="363" width="330" height="653" rx="5" fill="#303030"/>
<rect x="1590" y="388" width="28" height="628" fill="#1d1d1d"/>
<rect x="1592" y="757" width="26" height="26" rx="4" fill="#303030"/>
<rect x="1598" y="365" width="32" height="20" rx="4" fill="#2a2a2a" stroke="#3f3f3f"/><rect x="1603" y="368" width="14" height="6" rx="3" fill="#e4e4e4"/><rect x="1603" y="376" width="14" height="6" rx="3" fill="#e4e4e4"/><use href="#cd" x="1624" y="375"/>
<rect x="1696" y="365" width="118" height="20" rx="4" fill="#1d1d1d" stroke="#3a3a3a"/><circle cx="1709" cy="374" r="5" fill="none" stroke="#ccc"/><path d="M1705.500 378 1701 382" stroke="#ccc" stroke-width="1.300"/><text x="1722" y="380" style="fill:#6a6a6a">Search</text>
<rect x="1892" y="365" width="19" height="20" rx="4" fill="#2a2a2a" stroke="#3f3f3f"/><use href="#cd" x="1902" y="375"/>
<!-- tabs -->
<path d="M1599 403V408M1596 408H1602V417H1596ZM1609 400V417M1605 401Q1605 406 1609 406 1613 406 1613 401" fill="none" stroke="#c4c4c4" stroke-width="1.500"/>
<path d="M1598 441H1611V453H1598ZM1600 441V438H1605V441M1613 441H1612" fill="none" stroke="#bbb" stroke-width="1.500"/><circle cx="1604" cy="447" r="2.500" fill="#bbb"/>
<rect x="1598" y="467" width="14" height="6" fill="#ccc"/><rect x="1601" y="474" width="8" height="8" fill="#666" stroke="#ccc"/>
<use href="#imgs" x="1605" y="502"/>
<path d="M1602 523C1605 528 1606 530 1605 534 1602 538 1598 536 1598 532 1598 529 1601 527 1602 523Z" fill="#bbb"/><circle cx="1607" cy="534" r="3.500" fill="#1d1d1d" stroke="#bbb"/><circle cx="1610" cy="525" r="1.800" fill="#bbb"/>
<circle cx="1605" cy="558" r="6.500" fill="none" stroke="#b85a68" stroke-width="1.300"/><path d="M1600 556Q1605 553 1607 558L1603 563ZM1608 552 1611 555" fill="#b85a68" stroke="#b85a68"/>
<path d="M1598 588H1612V591H1598ZM1599 592H1611V600H1599ZM1603 594V596H1607V594Z" fill="#ddd" fill-rule="evenodd"/>
<path d="M1598 627V623H1602M1608 623H1612V627M1612 633V637H1608M1602 637H1598V633" fill="none" stroke="#b87a40" stroke-width="1.200"/><rect x="1601" y="626" width="8" height="8" fill="#c8823f"/>
<path d="M1598 668 1605 660Q1604 653 1611 652L1608 656 1611 659 1614 655Q1615 663 1608 664L1601 671Z" fill="#4f82d8"/>
<circle cx="1600" cy="681" r="3" fill="#4f82d8"/><path d="M1600 681V693M1600 681 1611 693M1603 681H1611" stroke="#4f82d8" stroke-width="1.200"/>
<circle cx="1605" cy="714" r="6.500" fill="none" stroke="#4f82d8" stroke-width="1.300"/><circle cx="1605" cy="714" r="2.300" fill="#4f82d8"/><circle cx="1610" cy="708" r="1.500" fill="#4f82d8"/>
<ellipse cx="1605" cy="742" rx="7" ry="5" transform="rotate(-35 1605 742)" fill="none" stroke="#4f82d8" stroke-width="1.500"/><circle cx="1604" cy="743" r="2.800" fill="none" stroke="#4f82d8" stroke-width="1.300"/>
<use href="#mesh" x="1605" y="770" style="color:#19d2a5"/>
<circle cx="1605" cy="798" r="7" fill="#b85a68"/><path d="M1605 791A7 7 0 0 1 1612 798H1605Z" fill="#1d1d1d"/><path d="M1598 798A7 7 0 0 0 1605 805V798Z" fill="#d8d8d8" opacity=".3"/>
<rect x="1598" y="827" width="14" height="14" fill="#b85a68"/><g fill="#1d1d1d"><rect x="1598" y="827" width="3.500" height="3.500"/><rect x="1605" y="827" width="3.500" height="3.500"/><rect x="1601.500" y="830.500" width="3.500" height="3.500"/><rect x="1608.500" y="830.500" width="3.500" height="3.500"/><rect x="1598" y="834" width="3.500" height="3.500"/><rect x="1605" y="834" width="3.500" height="3.500"/><rect x="1601.500" y="837.500" width="3.500" height="3.500"/><rect x="1608.500" y="837.500" width="3.500" height="3.500"/></g>
<path d="M1591 587H1618M1591 822H1618M1591 425H1618M1591 572H1618" stroke="#2a2a2a"/>
<!-- breadcrumb -->
<path d="M1630 403V400H1633M1640 400H1643V403M1643 409V412H1640M1633 412H1630V409" fill="none" stroke="#ccc"/><rect x="1632" y="401.500" width="9" height="9" fill="#e6e6e6"/>
<text x="1652" y="410">Plane</text><use href="#cr" x="1700" y="406"/>
<use href="#mesh" x="1720" y="405" style="color:#d8d8d8"/><text x="1736" y="410">Plane.007</text>
<path d="M1896 412 1900 407M1899 402 1906 409 1908 400Z" fill="none" stroke="#888" stroke-width="1.200"/>
<!-- data field -->
<rect x="1626" y="433" width="285" height="19" rx="4" fill="#2a2a2a" stroke="#3d3d3d"/>
<rect x="1658" y="433" width="234" height="19" fill="#1d1d1d"/>
<path d="M1892 433H1907Q1911 433 1911 437V448Q1911 452 1907 452H1892Z" fill="#545454"/>
<use href="#mesh" x="1638" y="442" style="color:#e0e0e0"/><use href="#cd" x="1651" y="443"/>
<text x="1665" y="446" style="fill:#e4e4e4">Plane.007</text>
<path d="M1895 438Q1901 438 1901 435 1902 438 1908 438 1909 447 1901.500 449 1894 447 1895 438Z" fill="none" stroke="#aaa" stroke-width="1.200"/>
<!-- panels -->
<g fill="#3d3d3d">
<rect x="1626" y="462" width="286" height="121" rx="4"/><rect x="1626" y="585" width="286" height="146" rx="4"/><rect x="1626" y="733" width="286" height="25" rx="4"/><rect x="1626" y="760" width="286" height="25" rx="4"/><rect x="1626" y="787" width="286" height="25" rx="4"/><path d="M1630 814H1908Q1912 814 1912 818V1016H1626V818Q1626 814 1630 814Z"/>
</g>
<use href="#cd" x="1638.500" y="476"/><text x="1648" y="479">Vertex Groups</text><use href="#grip" x="1895" y="473"/>
<rect x="1635" y="496" width="240" height="78" rx="4" fill="#2d2d2d"/>
<rect x="1885" y="496" width="18" height="19" rx="3" fill="#545454"/><rect x="1885" y="515" width="18" height="19" rx="3" fill="#484848"/>
<path d="M1889.500 505H1899M1894 500.500V509.500" stroke="#e8e8e8" stroke-width="1.200"/><path d="M1889.500 524H1899" stroke="#7a7a7a" stroke-width="1.200"/>
<rect x="1885" y="542" width="18" height="18" rx="3" fill="#262626"/><use href="#cd" x="1894" y="551"/>
<path d="M1646 561 1652 564.500 1646 568Z" fill="#b0b0b0"/><use href="#grip" x="1760" y="562"/>
<use href="#cd" x="1638.500" y="599"/><text x="1648" y="602">Shape Keys</text><use href="#grip" x="1895" y="596"/>
<rect x="1635" y="619" width="240" height="79" rx="4" fill="#2d2d2d"/>
<rect x="1885" y="619" width="18" height="19" rx="3" fill="#484848"/><rect x="1885" y="638" width="18" height="19" rx="3" fill="#484848"/>
<path d="M1889.500 628H1899M1894 623.500V632.500M1889.500 647H1899" stroke="#7a7a7a" stroke-width="1.200"/>
<rect x="1885" y="665" width="18" height="18" rx="3" fill="#262626"/><use href="#cd" x="1894" y="674"/>
<path d="M1646 684 1652 687.500 1646 691Z" fill="#b0b0b0"/><use href="#grip" x="1760" y="685"/>
<rect x="1635" y="707" width="12" height="12" rx="2" fill="#545454"/><text x="1651" y="717">Add Rest Position</text>
<use href="#cr" x="1639" y="746"/><text x="1648" y="750">UV Maps</text><use href="#grip" x="1895" y="744"/>
<use href="#cr" x="1639" y="773"/><text x="1648" y="777">Color Attributes</text><use href="#grip" x="1895" y="771"/>
<use href="#cr" x="1639" y="800"/><text x="1648" y="804">Attributes</text><use href="#grip" x="1895" y="798"/>
<use href="#cd" x="1638.500" y="827"/><text x="1648" y="831">Texture Space</text><use href="#grip" x="1895" y="825"/>
<text x="1728" y="861" class="e">Texture Mesh</text>
<rect x="1739" y="848" width="144" height="18" rx="4" fill="#1d1d1d"/><use href="#mesh" x="1750" y="857" style="color:#e0e0e0"/><text x="1764" y="861" style="fill:#6a6a6a">Mesh</text>
<path d="M1866 865 1874 856M1872 853 1876 857M1874 851Q1878 848 1880 851 1880 854 1877 855" fill="none" stroke="#c8c8c8" stroke-width="1.500"/>
<rect x="1739" y="887" width="12" height="12" rx="2" fill="#4772b3"/><path d="M1741.500 893 1744 896 1749 889.500" fill="none" stroke="#fff" stroke-width="1.600"/>
<text x="1755" y="897">Auto Texture Space</text><circle cx="1894" cy="893" r="1.800" fill="#e0e0e0"/>
<g fill="#484848"><rect x="1739" y="909" width="144" height="18.500" rx="3"/><rect x="1739" y="928.500" width="144" height="19" rx="1"/><rect x="1739" y="948" width="144" height="19" rx="3"/><rect x="1739" y="974" width="144" height="18.500" rx="3"/><rect x="1739" y="993" width="144" height="19" rx="1"/><rect x="1739" y="1013" width="144" height="3"/></g>
<text x="1728" y="922" class="e">Location X</text><text x="1728" y="942" class="e">Y</text><text x="1728" y="962" class="e">Z</text><text x="1728" y="987" class="e">Size X</text><text x="1728" y="1007" class="e">Y</text>
<g style="fill:#8c8c8c"><text x="1811" y="922" class="m" style="fill:#8c8c8c">0.583 m</text><text x="1811" y="941" class="m" style="fill:#8c8c8c">-0.425 m</text><text x="1811" y="961" class="m" style="fill:#8c8c8c">-0.181 m</text><text x="1811" y="987" class="m" style="fill:#8c8c8c">1.589</text><text x="1811" y="1006" class="m" style="fill:#8c8c8c">0.600</text></g>
<g fill="#6a6a6a"><circle cx="1894" cy="918" r="1.800"/><circle cx="1894" cy="938" r="1.800"/><circle cx="1894" cy="958" r="1.800"/><circle cx="1894" cy="983" r="1.800"/><circle cx="1894" cy="1003" r="1.800"/></g>
<rect x="1914" y="400" width="3" height="525" rx="1.500" fill="#454545"/>
</svg>
</body></html>
